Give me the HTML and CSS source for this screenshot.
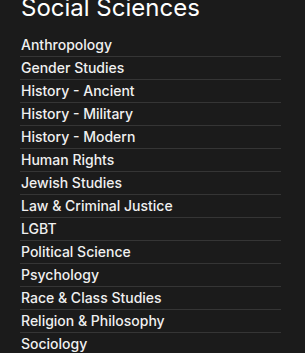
FILE: index.html
```html
<!DOCTYPE html>
<html lang="en">
<head>
    <meta charset="UTF-8">
    <meta name="viewport" content="width=device-width, initial-scale=1.0">
    <title>Social Sciences</title>
    <link rel="stylesheet" href="styles.css">
</head>
<body>
    <div class="category">
        <h1 class="category-title">Social Sciences</h1>
        <ul class="category-list">
            <li><a href="#">Anthropology</a></li>
            <li><a href="#">Gender Studies</a></li>
            <li><a href="#">History - Ancient</a></li>
            <li><a href="#">History - Military</a></li>
            <li><a href="#">History - Modern</a></li>
            <li><a href="#">Human Rights</a></li>
            <li><a href="#">Jewish Studies</a></li>
            <li><a href="#">Law &amp; Criminal Justice</a></li>
            <li><a href="#">LGBT</a></li>
            <li><a href="#">Political Science</a></li>
            <li><a href="#">Psychology</a></li>
            <li><a href="#">Race &amp; Class Studies</a></li>
            <li><a href="#">Religion &amp; Philosophy</a></li>
            <li><a href="#">Sociology</a></li>
        </ul>
    </div>
</body>
</html>
```

FILE: styles.css
```css
/* General Styles */
body {
    font-family: Inter, 'Liberation Sans', sans-serif;
    background-color: #1b1b1b;
    color: #f0f0f0;
    margin: 0;
    padding: 0 24px 0 20px;
    overflow: hidden;
}

.category {
    width: 261px;
}

.category-title {
    font-size: 24px;
    line-height: 28px;
    font-weight: 400;
    margin: -6px 0 12px 1px;
    color: #ffffff;
}

/* List */
.category-list {
    list-style: none;
    margin: 0;
    padding: 0;
}

.category-list li {
    height: 22px;
    line-height: 22px;
    border-bottom: 1px solid #353535;
}

.category-list a {
    display: block;
    padding-left: 1px;
    font-size: 14px;
    font-weight: 500;
    color: #f0f0f0;
    text-decoration: none;
}
```
